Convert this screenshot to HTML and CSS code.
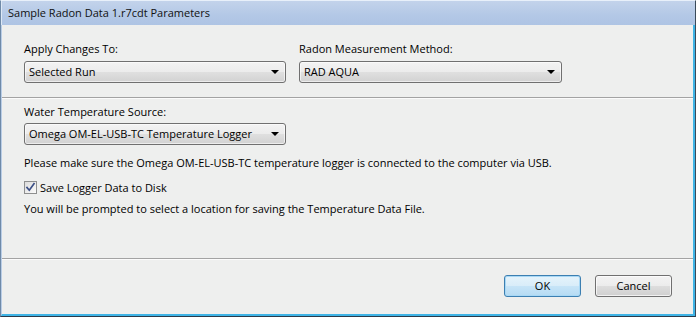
FILE: index.html
```html
<!DOCTYPE html>
<html>
<head>
<meta charset="utf-8">
<link rel="stylesheet" href="styles.css">
</head>
<body>
<div class="window">
  <div class="titlebar">Sample Radon Data 1.r7cdt Parameters</div>
  <div class="client">
    <section class="group group-top">
      <div class="field field-apply">
        <div class="label">Apply Changes To:</div>
        <div class="combo combo-apply"><span class="combo-text">Selected Run</span><span class="arrow"></span></div>
      </div>
      <div class="field field-method">
        <div class="label">Radon Measurement Method:</div>
        <div class="combo combo-method"><span class="combo-text">RAD AQUA</span><span class="arrow"></span></div>
      </div>
    </section>
    <div class="sep"></div>
    <section class="group group-mid">
      <div class="label">Water Temperature Source:</div>
      <div class="combo combo-source"><span class="combo-text">Omega OM-EL-USB-TC Temperature Logger</span><span class="arrow"></span></div>
      <p class="note note-usb">Please make sure the Omega OM-EL-USB-TC temperature logger is connected to the computer via USB.</p>
      <label class="check">
        <span class="box"><svg width="11" height="11" viewBox="0 0 11 11"><path d="M2 5.5 L4.3 8.2 L9 1.8" fill="none" stroke="#3b4f86" stroke-width="1.7" stroke-linejoin="miter" stroke-linecap="square"/></svg></span>
        <span class="check-text">Save Logger Data to Disk</span>
      </label>
      <p class="note note-prompt">You will be prompted to select a location for saving the Temperature Data File.</p>
    </section>
    <div class="sep"></div>
    <div class="buttons">
      <button class="btn btn-default">OK</button>
      <button class="btn">Cancel</button>
    </div>
  </div>
</div>
</body>
</html>
```

FILE: styles.css
```css
html, body {
  margin: 0;
  padding: 0;
  background: #eeefee;
}

.window {
  width: 696px;
  height: 317px;
  box-sizing: border-box;
  display: flex;
  flex-direction: column;
  border-left: 1px solid #6f8aa8;
  border-right: 1px solid #3a4a5a;
  border-bottom: 1px solid #2a3a4a;
  border-top: 1px solid #e8f0fa;
  background: #eeefee;
  font-family: "Open Sans", "Noto Sans", sans-serif;
  font-size: 11px;
  color: #000;
}

.titlebar {
  height: 24px;
  box-sizing: border-box;
  padding: 4px 0 0 6px;
  line-height: 16px;
  font-size: 11px;
  background: linear-gradient(#c3d3eb, #b3c8e6 60%, #aec4e4);
  color: #111;
  border-left: 1px solid #dde8f5;
}

.client {
  flex: 1;
  display: flex;
  flex-direction: column;
  border-left: 1px solid #b9cde6;
  border-right: 2px solid #3fb4e6;
  border-bottom: 2px solid #3fb4e6;
}

.group-top {
  display: flex;
  gap: 13px;
  padding: 16px 0 14px 22px;
}

.label {
  line-height: 15px;
  height: 15px;
  margin-bottom: 5px;
}

.combo {
  position: relative;
  height: 22px;
  box-sizing: border-box;
  border: 1px solid #707070;
  border-radius: 3px;
  background: linear-gradient(#f3f3f3, #ececec 48%, #dfdfdf 52%, #d2d2d2);
  box-shadow: inset 0 0 0 1px rgba(255,255,255,0.6);
  display: flex;
  align-items: center;
  padding-left: 4px;
}

.combo-text {
  flex: 1;
  line-height: 18px;
  white-space: nowrap;
}

.arrow {
  width: 0;
  height: 0;
  border-left: 4px solid transparent;
  border-right: 4px solid transparent;
  border-top: 4px solid #000;
  margin-right: 6px;
  margin-left: 4px;
}

.combo-apply { width: 262px; }
.combo-method { width: 263px; }
.combo-source { width: 262px; }

.sep {
  height: 0;
  border-top: 1px solid #a3a3a3;
  border-bottom: 1px solid #fbfbfb;
}

.group-mid {
  padding: 5px 0 0 22px;
  height: 159px;
  box-sizing: border-box;
}

.group-mid .label {
  margin-bottom: 4px;
}

.note {
  margin: 0;
  line-height: 15px;
}

.note-usb {
  margin-top: 10px;
}

.check {
  display: flex;
  align-items: center;
  margin-top: 10px;
  height: 15px;
}

.box {
  width: 13px;
  height: 13px;
  box-sizing: border-box;
  border: 1px solid #8e8f8f;
  background: linear-gradient(135deg, #dcdcdc, #fbfbfb);
  display: flex;
  align-items: center;
  justify-content: center;
  margin-right: 3px;
}

.box svg { display: block; }

.note-prompt {
  margin-top: 6px;
}

.buttons {
  display: flex;
  justify-content: flex-end;
  gap: 14px;
  padding: 15px 21px 0 0;
}

.btn {
  width: 77px;
  height: 22px;
  box-sizing: border-box;
  border: 1px solid #707070;
  border-radius: 3px;
  background: linear-gradient(#f3f3f3, #ececec 48%, #dddddd 52%, #cfcfcf);
  box-shadow: inset 0 0 0 1px rgba(255,255,255,0.7);
  font-family: inherit;
  font-size: 11px;
  color: #000;
  padding: 0;
  line-height: 18px;
}

.btn-default {
  border-color: #3c7fb1;
  background: linear-gradient(#e5f3fb, #d9edf9 48%, #c6e4f7 52%, #b5dbf3);
  box-shadow: inset 0 0 0 1px #a8d8f5;
}
```
